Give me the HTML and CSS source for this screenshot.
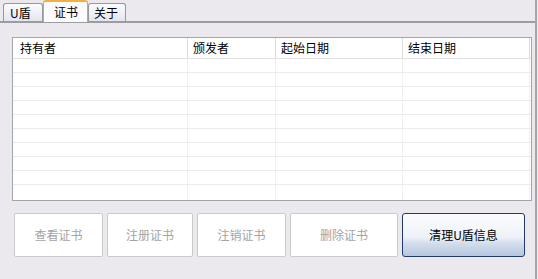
FILE: index.html
```html
<!DOCTYPE html>
<html lang="zh-CN">
<head>
    <meta charset="UTF-8">
    <title>证书</title>
    <link rel="stylesheet" href="styles.css">
</head>
<body>
    <div class="window">
        <div class="tabs">
            <div class="tab">U盾</div>
            <div class="tab active">证书</div>
            <div class="tab">关于</div>
        </div>

        <div class="panel">
            <div class="list">
                <div class="list-head">
                    <div class="col">持有者</div>
                    <div class="col">颁发者</div>
                    <div class="col">起始日期</div>
                    <div class="col">结束日期</div>
                </div>
                <div class="list-body">
                    <div class="row"><span></span><span></span><span></span><span></span></div>
                    <div class="row"><span></span><span></span><span></span><span></span></div>
                    <div class="row"><span></span><span></span><span></span><span></span></div>
                    <div class="row"><span></span><span></span><span></span><span></span></div>
                    <div class="row"><span></span><span></span><span></span><span></span></div>
                    <div class="row"><span></span><span></span><span></span><span></span></div>
                    <div class="row"><span></span><span></span><span></span><span></span></div>
                    <div class="row"><span></span><span></span><span></span><span></span></div>
                    <div class="row"><span></span><span></span><span></span><span></span></div>
                    <div class="row"><span></span><span></span><span></span><span></span></div>
                </div>
            </div>

            <div class="buttons">
                <button class="btn btn-view" disabled>查看证书</button>
                <button class="btn btn-reg" disabled>注册证书</button>
                <button class="btn btn-unreg" disabled>注销证书</button>
                <button class="btn btn-del" disabled>删除证书</button>
                <button class="btn btn-clear">清理U盾信息</button>
            </div>
        </div>
    </div>
</body>
</html>
```

FILE: styles.css
```css
body {
    margin: 0;
    padding: 0;
    background-color: #ebe9ed;
    font-family: "Noto Sans CJK SC", "DejaVu Sans", sans-serif;
    font-size: 12px;
    color: #000;
}
.window {
    width: 535px;
    height: 279px;
    border-right: 2px solid #a7a6aa;
}
.tabs {
    display: flex;
    align-items: flex-end;
    height: 21px;
    padding-left: 3px;
    border-bottom: 2px solid #9c9ca0;
}
.tab {
    height: 18px;
    line-height: 17px;
    padding: 0 6px;
    border: 1px solid #919b9c;
    border-bottom: none;
    border-radius: 3px 3px 0 0;
    background: linear-gradient(#fcfcfe, #e3e6ee);
    box-sizing: border-box;
}
.tab:first-child {
    width: 40px;
}
.tab.active {
    width: 45px;
    height: 22px;
    line-height: 19px;
    padding-left: 10px;
    background: #fcfcfe;
    border-top: 2px solid #f2b13f;
    margin-bottom: -1px;
    border-left-color: #a8adb4;
    border-right-color: #a8adb4;
}
.tab:last-child {
    width: 38px;
    padding-left: 5px;
}
.panel {
    padding: 14px 0 0 12px;
}
.list {
    width: 518px;
    border: 1px solid #a2a5a9;
    background: #fff;
}
.list-head, .row {
    display: grid;
    grid-template-columns: 175px 88px 127px 127px;
}
.list-head {
    height: 20px;
    border-bottom: 1px solid #e2e2e2;
}
.list-head .col {
    line-height: 20px;
    padding-left: 5px;
    border-right: 1px solid #dcdcdc;
}
.list-head .col:first-child {
    padding-left: 7px;
}
.row {
    height: 14px;
    border-bottom: 1px solid #ebebeb;
    box-sizing: border-box;
}
.row:last-child {
    border-bottom: none;
    height: 15px;
}
.row span {
    border-right: 1px solid #f0f0f0;
}
.buttons {
    display: flex;
    gap: 4px;
    margin-top: 12px;
    padding-left: 2px;
}
.btn {
    height: 44px;
    font-family: inherit;
    font-size: 12px;
    background: #fff;
    border: 1px solid #cacaca;
    border-radius: 2px;
    color: #a4a4a4;
    padding: 0 0 2px;
}
.btn-view, .btn-unreg { width: 89px; }
.btn-reg { width: 86px; }
.btn-del { width: 108px; }
.btn-clear {
    width: 123px;
    color: #000;
    border: 1px solid #1f3b6e;
    border-radius: 3px;
    background: linear-gradient(#fbfcfe 0%, #eef2f8 55%, #d3ddec 70%, #b7c6de 100%);
}
```
